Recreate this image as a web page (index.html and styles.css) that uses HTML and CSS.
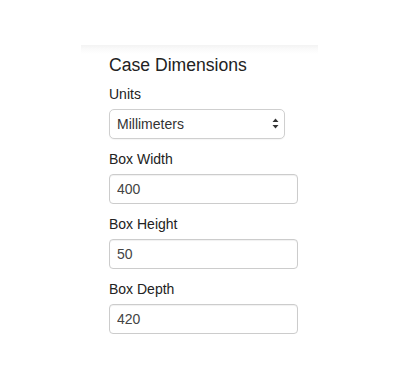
FILE: index.html
```html
<!DOCTYPE html>
<html>
<head>
<meta charset="utf-8">
<link rel="stylesheet" href="styles.css">
</head>
<body>
<div class="panel">
  <h3 class="title">Case Dimensions</h3>
  <div class="group">
    <label class="label">Units</label>
    <div class="select-wrap">
      <select class="select"><option>Millimeters</option></select>
      <svg class="arrows" width="7" height="11" viewBox="0 0 7 11"><path d="M3.5 0.5 L6.5 4 L0.5 4 Z M3.5 10.5 L6.5 7 L0.5 7 Z" fill="#333"/></svg>
    </div>
  </div>
  <div class="group">
    <label class="label">Box Width</label>
    <input class="input" type="text" value="400">
  </div>
  <div class="group">
    <label class="label">Box Height</label>
    <input class="input" type="text" value="50">
  </div>
  <div class="group">
    <label class="label">Box Depth</label>
    <input class="input" type="text" value="420">
  </div>
</div>
</body>
</html>
```
FILE: styles.css
```css
html, body {
  margin: 0;
  padding: 0;
  background: #fff;
}
body {
  padding-top: 45px;
  font-family: "Liberation Sans", Arial, sans-serif;
  color: #333;
}
.panel {
  margin-left: 81px;
  width: 237px;
  padding: 9px 0 0 28px;
  box-sizing: border-box;
  background: linear-gradient(to bottom, #f3f3f3 0px, #fafafa 4px, #fff 9px);
  display: flex;
  flex-direction: column;
}
.title {
  margin: 0 0 8px 0;
  font-size: 17.6px;
  line-height: 22px;
  font-weight: normal;
  color: #222;
}
.group {
  display: flex;
  flex-direction: column;
  align-items: flex-start;
  margin-bottom: 10px;
}
.label {
  font-size: 14px;
  line-height: 20px;
  margin-bottom: 5px;
  color: #222;
}
.select-wrap {
  position: relative;
  width: 176px;
}
.select {
  -webkit-appearance: none;
  appearance: none;
  display: block;
  width: 176px;
  height: 30px;
  box-sizing: border-box;
  border: 1px solid #cfcfcf;
  border-radius: 5px;
  background: #fff;
  padding: 0 0 0 7px;
  font-family: "Liberation Sans", Arial, sans-serif;
  font-size: 14px;
  color: #333;
  margin: 0;
  box-shadow: 0 1px 1px rgba(0,0,0,0.04);
}
.arrows {
  position: absolute;
  right: 6px;
  top: 9px;
}
.input {
  display: block;
  width: 189px;
  height: 30px;
  box-sizing: border-box;
  border: 1px solid #cccccc;
  border-radius: 4px;
  padding: 0 0 0 7px;
  margin: 0;
  font-family: "Liberation Sans", Arial, sans-serif;
  font-size: 14px;
  color: #444;
  background: #fff;
  box-shadow: inset 0 1px 1px rgba(0,0,0,0.06);
  outline: none;
}
```
